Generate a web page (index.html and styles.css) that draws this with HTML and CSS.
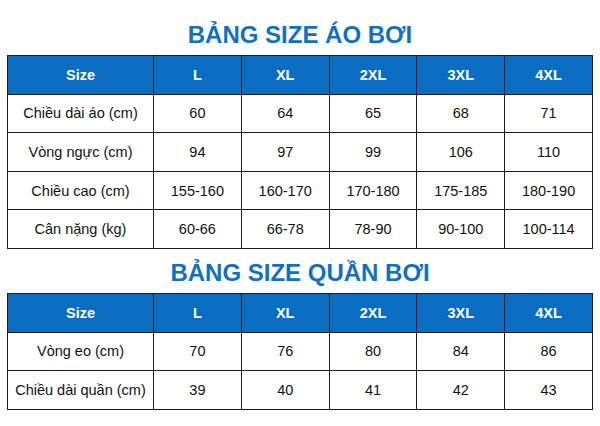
FILE: index.html
```html
<!DOCTYPE html>
<html lang="vi">
<head>
<meta charset="utf-8">
<title>Bảng size đồ bơi</title>
<link rel="stylesheet" href="styles.css">
</head>
<body>
<h1 class="title title-first">BẢNG SIZE ÁO BƠI</h1>
<table class="size-table">
  <colgroup><col class="c-label"><col><col><col><col><col></colgroup>
  <thead>
    <tr><th>Size</th><th>L</th><th>XL</th><th>2XL</th><th>3XL</th><th>4XL</th></tr>
  </thead>
  <tbody>
    <tr><td>Chiều dài áo (cm)</td><td>60</td><td>64</td><td>65</td><td>68</td><td>71</td></tr>
    <tr><td>Vòng ngực (cm)</td><td>94</td><td>97</td><td>99</td><td>106</td><td>110</td></tr>
    <tr><td>Chiều cao (cm)</td><td>155-160</td><td>160-170</td><td>170-180</td><td>175-185</td><td>180-190</td></tr>
    <tr><td>Cân nặng (kg)</td><td>60-66</td><td>66-78</td><td>78-90</td><td>90-100</td><td>100-114</td></tr>
  </tbody>
</table>
<h1 class="title title-second">BẢNG SIZE QUẦN BƠI</h1>
<table class="size-table">
  <colgroup><col class="c-label"><col><col><col><col><col></colgroup>
  <thead>
    <tr><th>Size</th><th>L</th><th>XL</th><th>2XL</th><th>3XL</th><th>4XL</th></tr>
  </thead>
  <tbody>
    <tr><td>Vòng eo (cm)</td><td>70</td><td>76</td><td>80</td><td>84</td><td>86</td></tr>
    <tr><td>Chiều dài quần (cm)</td><td>39</td><td>40</td><td>41</td><td>42</td><td>43</td></tr>
  </tbody>
</table>
</body>
</html>
```
FILE: styles.css
```css
html, body {
  margin: 0;
  padding: 0;
  background: #ffffff;
}
body {
  width: 600px;
  font-family: "Liberation Sans", Arial, sans-serif;
  color: #111111;
}
.title {
  margin: 0;
  text-align: center;
  font-size: 24px;
  line-height: 28px;
  font-weight: 700;
  color: #1270c0;
}
.title-first {
  padding-top: 21px;
}
.title-second {
  margin-top: 10px;
}
.size-table {
  margin: 6px 0 0 7px;
  width: 586px;
  border-collapse: collapse;
  table-layout: fixed;
  border: 1.5px solid #1c1c1c;
}
.size-table .c-label {
  width: 146px;
}
.size-table th,
.size-table td {
  border: 1.5px solid #1c1c1c;
  height: 37.6px;
  padding: 0;
  text-align: center;
  vertical-align: middle;
  font-size: 14.5px;
}
.size-table th {
  background: #0a6dc2;
  color: #ffffff;
  font-weight: 700;
}
.size-table td {
  color: #111111;
}
```
